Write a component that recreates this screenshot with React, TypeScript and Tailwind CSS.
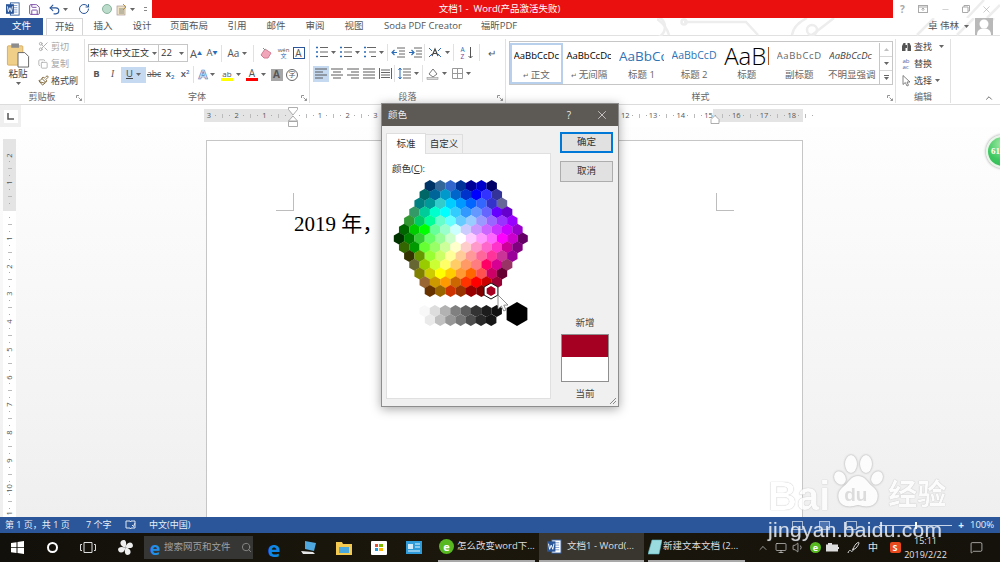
import { ReactNode } from "react";
import {
  Undo2,
  RotateCw,
  Scissors,
  Copy,
  Paintbrush,
  X,
  Minus,
  ChevronUp,
  Search,
  MessageSquare,
  Volume1,
  Monitor,
  Save,
} from "lucide-react";

const FONT = "[font-family:'Open_Sans','Noto_Sans_CJK_SC',sans-serif]";

// Office's standard honeycomb, row by row
const HEX_ROWS = [
  ["003366", "336699", "3366CC", "003399", "000099", "0000CC", "000066"],
  ["006666", "006699", "0099CC", "0066CC", "0033CC", "0000FF", "3333FF", "333399"],
  ["008080", "009999", "33CCCC", "00CCFF", "0099FF", "0066FF", "3366FF", "3333CC", "666699"],
  ["339966", "00CC99", "00FFCC", "00FFFF", "33CCFF", "3399FF", "6699FF", "6666FF", "6600FF", "6600CC"],
  ["339933", "00CC66", "00FF99", "66FFCC", "66FFFF", "66CCFF", "99CCFF", "9999FF", "9966FF", "9933FF", "9900FF"],
  ["006600", "00CC00", "00FF00", "66FF99", "99FFCC", "CCFFFF", "CCCCFF", "CC99FF", "CC66FF", "CC33FF", "CC00FF", "9900CC"],
  ["003300", "008000", "33CC33", "66FF66", "99FF99", "CCFFCC", "FFFFFF", "FFCCFF", "FF99FF", "FF66FF", "FF00FF", "CC00CC", "660066"],
  ["336600", "009900", "66FF33", "99FF66", "CCFF99", "FFFFCC", "FFCCCC", "FF99CC", "FF66CC", "FF33CC", "CC0099", "800080"],
  ["333300", "669900", "99FF33", "CCFF66", "FFFF99", "FFCC99", "FF9999", "FF6699", "FF3399", "CC3399", "990099"],
  ["666633", "99CC00", "CCFF33", "FFFF66", "FFCC66", "FF9966", "FF7C80", "FF0066", "D60093", "993366"],
  ["808000", "CCCC00", "FFFF00", "FFCC00", "FF9933", "FF6600", "FF5050", "CC0066", "660033"],
  ["996633", "CC9900", "FF9900", "CC6600", "FF3300", "FF0000", "CC0000", "990033"],
  ["663300", "996600", "CC3300", "993300", "990000", "800000", "A50021"],
];
const GRAYS_TOP = ["F8F8F8", "DDDDDD", "B2B2B2", "808080", "5F5F5F", "333333", "1C1C1C", "111111"];
const GRAYS_BOTTOM = ["EAEAEA", "C0C0C0", "969696", "777777", "4D4D4D", "292929", "161616"];

const hexPoints = (cx: number, cy: number, r: number) =>
  [0, 1, 2, 3, 4, 5]
    .map((i) => {
      const a = (Math.PI / 3) * i + Math.PI / 6;
      return `${(cx + r * Math.cos(a)).toFixed(2)},${(cy + r * Math.sin(a)).toFixed(2)}`;
    })
    .join(" ");

function ColorHoney() {
  const step = 10.3;
  const center = 460.8;
  return (
    <svg width={136} height={152} viewBox="395 178 136 152" className="block overflow-visible">
      {HEX_ROWS.map((row, r) =>
        row.map((c, i) => (
          <polygon
            key={`${r}-${i}`}
            points={hexPoints(center + (i - (row.length - 1) / 2) * step, 186 + r * 8.75, 6)}
            fill={`#${c}`}
          />
        ))
      )}
      {GRAYS_TOP.map((c, i) => (
        <polygon key={c} points={hexPoints(424.6 + i * 10.3, 311, 6)} fill={`#${c}`} />
      ))}
      {GRAYS_BOTTOM.map((c, i) => (
        <polygon key={c} points={hexPoints(430 + i * 10.2, 320, 6)} fill={`#${c}`} />
      ))}
      <polygon points={hexPoints(517, 314, 12)} fill="#000" />
      <polygon points={hexPoints(491, 291, 8)} fill="#fff" stroke="#111" strokeWidth="1" />
      <polygon points={hexPoints(491, 291, 5)} fill="#A50021" />
      <path d="M498 295 V309 L501.4 306 L503.8 311 L506 310 L503.8 305.2 L508 305 Z" fill="#fff" stroke="#777" strokeWidth=".8" />
    </svg>
  );
}

function Caret({ className = "" }: { className?: string }) {
  return (
    <svg width="5" height="3" viewBox="0 0 5 3" className={`shrink-0 ${className}`}>
      <path d="M0 0h5L2.5 3z" fill="#666" />
    </svg>
  );
}

function Launcher() {
  return (
    <svg width="7" height="7" viewBox="0 0 7 7" className="absolute right-[1px] bottom-[1px]">
      <path d="M.5 3V.5H3M2.5 2.5l3 3M5.5 3.5v2h-2" fill="none" stroke="#888" strokeWidth=".9" />
    </svg>
  );
}

function Tool({ children, className = "w-[16px]" }: { children: ReactNode; className?: string }) {
  return <div className={`flex h-[17px] shrink-0 items-center justify-center gap-[3px] text-[#555] ${className}`}>{children}</div>;
}

function Sep() {
  return <div className="mx-[1px] h-[17px] w-px shrink-0 bg-[#e1e1e1]" />;
}

function Group({ label, className, children, launcher = true }: { label: string; className: string; children: ReactNode; launcher?: boolean }) {
  return (
    <div className={`relative mt-[3px] mb-[1px] flex shrink-0 flex-col border-r border-[#e1e1e1] ${className}`}>
      <div className="flex-1">{children}</div>
      <div className="h-[12px] text-center text-[9px] leading-[12px] text-[#666]">{label}</div>
      {launcher && <Launcher />}
    </div>
  );
}

function Lines({ kind = "left" }: { kind?: "left" | "center" | "right" | "full" }) {
  const d = {
    left: "M1 2h12M1 5h8M1 8h12M1 11h8",
    center: "M1 2h12M3 5h8M1 8h12M3 11h8",
    right: "M1 2h12M5 5h8M1 8h12M5 11h8",
    full: "M1 2h12M1 5h12M1 8h12M1 11h12",
  }[kind];
  return (
    <svg width="14" height="13" viewBox="0 0 14 13">
      <path d={d} stroke="#5a5a5a" strokeWidth="1" fill="none" />
    </svg>
  );
}

function ListIcon({ color = "#2b6cb8", levels = false }: { color?: string; levels?: boolean }) {
  return (
    <svg width="13" height="13" viewBox="0 0 13 13">
      <path d="M1 1.5h2M1 6h2M1 10.5h2" stroke={color} strokeWidth="1.4" />
      <path d={levels ? "M4 1.5h9M6 6h7M8 10.5h5" : "M5 1.5h8M5 6h8M5 10.5h8"} stroke="#666" strokeWidth="1" />
    </svg>
  );
}

function WordIcon({ size = 14 }: { size?: number }) {
  return (
    <svg width={size} height={size} viewBox="0 0 16 16">
      <rect x="5" y="1" width="10" height="14" fill="#fff" stroke="#2b579a" />
      <path d="M8 4h5M8 6.5h5M8 9h5M8 11.5h5" stroke="#7f9ccb" />
      <rect x="0" y="2.5" width="9" height="11" fill="#2b579a" />
      <path d="M1.6 5l1.2 6 1.7-4.5L6.2 11l1.2-6" fill="none" stroke="#fff" strokeWidth="1" />
    </svg>
  );
}

function TabItem({ children, className }: { children: ReactNode; className: string }) {
  return <div className={`flex h-full shrink-0 items-center justify-center text-[9.5px] text-[#555] ${className}`}>{children}</div>;
}

function TitleBar() {
  return (
    <div className="flex h-[18px] shrink-0 items-center">
      <div className="flex w-[152px] shrink-0 items-center">
        <div className="flex w-[26px] justify-center">
          <WordIcon />
        </div>
        <div className="flex w-[16px] justify-center">
          <Save size={13} color="#7d4fa8" strokeWidth={1.8} />
        </div>
        <div className="ml-[5px] flex w-[14px] justify-center">
          <Undo2 size={13} color="#2b579a" strokeWidth={2} />
        </div>
        <Caret className="ml-[2px]" />
        <div className="ml-[8px] flex w-[16px] justify-center">
          <RotateCw size={12} color="#2b579a" strokeWidth={2} />
        </div>
        <div className="ml-[10px] h-[10px] w-[10px] rounded-full border border-[#88b39b] bg-[#bcdccb]" />
        <div className="ml-[4px] flex w-[12px] justify-center">
          <svg width="12" height="13" viewBox="0 0 12 13">
            <rect x="1" y="3" width="8" height="9" fill="#efe3c4" stroke="#a99" strokeWidth=".7" />
            <path d="M3 6h5M3 8h5M3 10h5" stroke="#666" strokeWidth=".7" />
            <path d="M7 1l3 3-3 3" fill="none" stroke="#b8923e" />
          </svg>
        </div>
        <Caret className="ml-[2px]" />
        <div className="ml-[9px] h-[4px] w-[3px] border-y border-[#888]" />
      </div>
      <div className="flex h-full w-[741px] shrink-0 items-center justify-center whitespace-pre bg-[#ea1010] pr-[46px] text-[9.5px] text-white">
        文档1 -  Word(产品激活失败)
      </div>
      <div className="relative flex h-full flex-1 items-center text-[#a8a8a8]">
        <svg width="107" height="18" viewBox="0 0 107 18" className="pointer-events-none absolute top-0 left-0">
          <path d="M74 18L91 0M94 18L107 5" fill="none" stroke="#ededed" strokeWidth="2.5" />
        </svg>
        <div className="relative flex w-[19px] justify-center">
          <span className="text-[10px] font-bold">?</span>
        </div>
        <div className="relative flex w-[22px] justify-center">
          <svg width="10" height="8" viewBox="0 0 10 8">
            <rect x=".5" y=".5" width="9" height="7" fill="none" stroke="#aaa" />
            <path d="M5 6V3M3.5 4.5L5 3l1.5 1.5M.5 2h9" fill="none" stroke="#aaa" />
          </svg>
        </div>
        <div className="relative flex w-[22px] justify-center">
          <Minus size={9} strokeWidth={1.4} />
        </div>
        <div className="relative flex w-[20px] justify-center">
          <svg width="8" height="8" viewBox="0 0 8 8">
            <path d="M2 2V.5h5.5V6H6M.5 2h5.5v5.5H.5z" fill="none" stroke="#aaa" />
          </svg>
        </div>
        <div className="relative flex w-[20px] justify-center">
          <X size={11} strokeWidth={1.3} />
        </div>
      </div>
    </div>
  );
}

function TabBar() {
  return (
    <div className="relative flex h-[18px] shrink-0 items-stretch border-b border-[#e1e1e1]">
      <svg width="343" height="18" viewBox="0 18 343 18" className="pointer-events-none absolute top-0 right-0">
        <g fill="none" stroke="#ededed" strokeWidth="2.5">
          <path d="M0 19c6 4 10 9 12 16M27 22h62l12 13M150 18c-10 5-14 10-15 17M155 35l22-17M260 35l17-17M300 35l17-17M320 35l17-17" />
          <circle cx="-3" cy="27" r="11" />
          <circle cx="27" cy="22" r="2.5" />
          <circle cx="155" cy="30" r="5" />
        </g>
      </svg>
      <TabItem className="w-[43px] bg-[#2b579a] text-white">文件</TabItem>
      <TabItem className="relative ml-[3px] -mb-px w-[37px] border-x border-t border-[#d5d5d5] bg-white text-[#2b579a]">开始</TabItem>
      <TabItem className="w-[40px]">插入</TabItem>
      <TabItem className="w-[38px]">设计</TabItem>
      <TabItem className="w-[56px]">页面布局</TabItem>
      <TabItem className="w-[40px]">引用</TabItem>
      <TabItem className="w-[38px]">邮件</TabItem>
      <TabItem className="w-[40px]">审阅</TabItem>
      <TabItem className="w-[38px]">视图</TabItem>
      <TabItem className="w-[100px]">Soda PDF Creator</TabItem>
      <TabItem className="w-[52px]">福昕PDF</TabItem>
      <div className="relative ml-auto flex items-center pr-[7px]">
        <span className="text-[9.5px] text-[#555]">卓 伟林</span>
        <Caret className="ml-[5px]" />
        <div className="ml-[6px] flex h-[17px] w-[18px] items-end justify-center overflow-hidden bg-[#b9b9b9]">
          <svg width="18" height="17" viewBox="0 0 18 17">
            <circle cx="9" cy="6" r="4.5" fill="#fff" />
            <path d="M2 17c0-5 3-6.500 7-6.500s7 1.500 7 6.500z" fill="#fff" />
          </svg>
        </div>
      </div>
    </div>
  );
}

function SmallCmd({ icon, label, disabled = false, caret = "" }: { icon: ReactNode; label: string; disabled?: boolean; caret?: string }) {
  return (
    <div className={`flex h-[17px] items-center gap-[1px] text-[9px] ${disabled ? "text-[#a6a6a6]" : "text-[#444]"}`}>
      <div className="flex w-[14px] justify-center">{icon}</div>
      <span>{label}</span>
      {caret && <Caret className={caret} />}
    </div>
  );
}

function ClipboardGroup() {
  return (
    <Group label="剪贴板" className="w-[85px]">
      <div className="flex">
        <div className="flex w-[36px] flex-col items-center pt-[3px]">
          <svg width="24" height="26" viewBox="0 0 24 27">
            <rect x="1" y="4" width="16" height="20" rx="1" fill="#f0cf88" stroke="#d6ae63" />
            <rect x="5" y="1.5" width="8" height="4.5" fill="#8d8d8d" />
            <path d="M12 11h7l4 4v11H12z" fill="#fff" stroke="#666" />
          </svg>
          <span className="text-[9.5px] leading-[11px] text-[#444]">粘贴</span>
          <Caret className="mt-[3px]" />
        </div>
        <div className="-mt-[1px] flex flex-col">
          <SmallCmd disabled label="剪切" icon={<Scissors size={11} color="#aaa" />} />
          <SmallCmd disabled label="复制" icon={<Copy size={10} color="#aaa" />} />
          <SmallCmd label="格式刷" icon={<Paintbrush size={11} color="#7a6030" />} />
        </div>
      </div>
    </Group>
  );
}

function FontGroup() {
  return (
    <Group label="字体" className="w-[225px]">
      <div className="flex items-center pt-[5px] pl-[3px]">
        <div className="flex h-[18px] w-[71px] shrink-0 items-center justify-between border border-[#c6c6c6] px-[1px] text-[9px] text-[#333]">
          <span className="whitespace-nowrap">宋体 (中文正文</span>
          <Caret />
        </div>
        <div className="-ml-px flex h-[18px] w-[30px] shrink-0 items-center justify-between border border-[#c6c6c6] px-[2px] text-[9.5px] text-[#333]">
          <span>22</span>
          <Caret className="mr-[1px]" />
        </div>
        <Tool className="w-[16px]">
          <span className="text-[11px] leading-none">
            A<sup className="text-[5px] text-[#2b6cb8]">▲</sup>
          </span>
        </Tool>
        <Tool className="w-[16px]">
          <span className="text-[9.5px] leading-none">
            A<sup className="text-[5px] text-[#2b6cb8]">▼</sup>
          </span>
        </Tool>
        <Sep />
        <Tool className="w-[29px]">
          <span className="text-[10px]">Aa</span>
          <Caret />
        </Tool>
        <Sep />
        <Tool className="ml-[1px] w-[20px]">
          <svg width="12" height="12" viewBox="0 0 12 12">
            <path d="M1 8l4-6 6 4-3 5H4z" fill="#f2a6ba" stroke="#d47c94" />
            <path d="M3 1l2 2" stroke="#888" />
          </svg>
        </Tool>
        <Tool className="w-[15px]">
          <div className="flex flex-col items-center text-[6px] leading-[6px]">
            <span>wén</span>
            <span className="text-[#2b6cb8]">文</span>
          </div>
        </Tool>
        <Tool className="w-[15px]">
          <div className="flex h-[12px] w-[12px] items-center justify-center border border-[#2b579a] text-[10px] leading-none">A</div>
        </Tool>
      </div>
      <div className="mt-[4px] flex items-center pl-[3px]">
        <Tool className="ml-[1px] w-[15px]">
          <b className="text-[9.5px]">B</b>
        </Tool>
        <Tool className="w-[17px]">
          <i className="text-[9.5px] [font-family:'Liberation_Serif',serif]">I</i>
        </Tool>
        <div className="flex h-[16px] w-[25px] shrink-0 items-center justify-center gap-[3px] bg-[#c5d9f1] text-[#444]">
          <u className="text-[9.5px]">U</u>
          <Caret />
        </div>
        <Tool className="w-[16px]">
          <s className="text-[8.5px]">abc</s>
        </Tool>
        <Tool className="w-[16px]">
          <span className="text-[9.5px] font-semibold">
            x<sub className="text-[6px] text-[#2b6cb8]">2</sub>
          </span>
        </Tool>
        <Tool className="w-[14px]">
          <span className="text-[9.5px] font-semibold">
            x<sup className="text-[6px] text-[#2b6cb8]">2</sup>
          </span>
        </Tool>
        <Sep />
        <Tool className="w-[24px]">
          <span className="text-[13px] font-bold text-[#dbe7f6] [-webkit-text-stroke:.7px_#4f81bd]">A</span>
          <Caret />
        </Tool>
        <Tool className="w-[24px]">
          <div className="flex flex-col items-center">
            <span className="text-[8px] leading-[9px]">ab</span>
            <div className="h-[3px] w-[12px] bg-[#ffff00]" />
          </div>
          <Caret />
        </Tool>
        <Tool className="w-[26px]">
          <div className="flex flex-col items-center">
            <span className="text-[10px] leading-[10px]">A</span>
            <div className="h-[3px] w-[12px] bg-[#ff0000]" />
          </div>
          <Caret />
        </Tool>
        <Tool className="w-[15px]">
          <div className="flex h-[12px] w-[12px] items-center justify-center bg-[#a6a6a6] text-[10px] font-bold">A</div>
        </Tool>
        <Tool className="w-[16px]">
          <div className="flex h-[12px] w-[12px] items-center justify-center rounded-full border border-[#666] text-[7px] leading-none">字</div>
        </Tool>
      </div>
    </Group>
  );
}

function ParagraphGroup() {
  return (
    <Group label="段落" className="w-[196px]">
      <div className="flex items-center pt-[5px] pl-[3px]">
        <Tool className="w-[24px]">
          <ListIcon />
          <Caret />
        </Tool>
        <Tool className="w-[24px]">
          <ListIcon />
          <Caret />
        </Tool>
        <Tool className="w-[25px]">
          <ListIcon levels />
          <Caret />
        </Tool>
        <Sep />
        <Tool className="w-[17px]">
          <svg width="14" height="11" viewBox="0 0 14 11">
            <path d="M6 1h8M8 4h6M8 7h6M6 10h8" stroke="#666" />
            <path d="M6 5.500H1M3.500 3L1 5.500 3.500 8" fill="none" stroke="#2b6cb8" strokeWidth="1.2" />
          </svg>
        </Tool>
        <Tool className="w-[17px]">
          <svg width="14" height="11" viewBox="0 0 14 11">
            <path d="M6 1h8M8 4h6M8 7h6M6 10h8" stroke="#666" />
            <path d="M1 5.500h5M3.500 3L6 5.500 3.500 8" fill="none" stroke="#2b6cb8" strokeWidth="1.2" />
          </svg>
        </Tool>
        <Sep />
        <Tool className="w-[26px]">
          <svg width="14" height="11" viewBox="0 0 14 11">
            <path d="M4 9l3-7 3 7M5.500 6.500h3" fill="none" stroke="#444" strokeWidth="1.2" />
            <path d="M1 1l3 3M13 1l-3 3M1 10l3-3M13 10l-3-3" stroke="#2b6cb8" />
          </svg>
          <Caret />
        </Tool>
        <Sep />
        <Tool className="w-[23px]">
          <div className="flex flex-col text-[6.5px] leading-[7px]">
            <span className="text-[#2b6cb8]">A</span>
            <span className="text-[#7a3fa0]">Z</span>
          </div>
          <svg width="5" height="12" viewBox="0 0 5 12">
            <path d="M2.500 0v11M.5 9l2 2 2-2" fill="none" stroke="#555" />
          </svg>
        </Tool>
        <Sep />
        <Tool className="w-[22px]">
          <span className="text-[10px] leading-none">↵</span>
        </Tool>
      </div>
      <div className="mt-[4px] flex items-center pl-[3px]">
        <div className="flex h-[16px] w-[16px] shrink-0 items-center justify-center bg-[#c5d9f1]">
          <Lines />
        </div>
        <Tool>
          <Lines kind="center" />
        </Tool>
        <Tool>
          <Lines kind="right" />
        </Tool>
        <Tool>
          <Lines kind="full" />
        </Tool>
        <Tool>
          <svg width="13" height="13" viewBox="0 0 13 13">
            <path d="M2 3h9M2 5.500h9M2 8h9M2 10.500h9" stroke="#666" />
            <path d="M.5 1v11M12.500 1v11" stroke="#2b6cb8" />
          </svg>
        </Tool>
        <Sep />
        <Tool className="w-[25px]">
          <svg width="13" height="13" viewBox="0 0 13 13">
            <path d="M5 2h8M5 5h8M5 8h8M5 11h8" stroke="#666" />
            <path d="M2 1v11M.5 3L2 1l1.500 2M.5 10L2 12l1.500-2" fill="none" stroke="#2b6cb8" />
          </svg>
          <Caret />
        </Tool>
        <Sep />
        <Tool className="w-[25px]">
          <svg width="13" height="13" viewBox="0 0 13 13">
            <path d="M3 7l4-5 4 5-4 3z" fill="#fff" stroke="#777" />
            <rect x="1" y="10.500" width="11" height="2" fill="#d8d8d8" stroke="#888" strokeWidth=".5" />
          </svg>
          <Caret />
        </Tool>
        <Tool className="w-[25px]">
          <svg width="11" height="11" viewBox="0 0 11 11">
            <path d="M.5.500h10v10H.500zM.5 5.500h10M5.500.5v10" fill="none" stroke="#999" />
          </svg>
          <Caret />
        </Tool>
      </div>
    </Group>
  );
}

function StyleItem({ label, sample, className = "", mark = false, selected = false }: { label: string; sample: string; className: string; mark?: boolean; selected?: boolean }) {
  return (
    <div className={`flex w-[52.6px] shrink-0 flex-col items-center overflow-hidden border-2 ${selected ? "border-[#b9d0ec]" : "border-transparent"}`}>
      <div className={`flex h-[22px] w-full items-center justify-center overflow-hidden whitespace-nowrap ${className}`}>
        <span className="w-[45px] overflow-hidden">{sample}</span>
      </div>
      <div className="mt-[1px] whitespace-nowrap text-[9.5px] leading-[13px] text-[#666]">
        {mark && <span className="mr-[2px] text-[7px]">↵</span>}
        {label}
      </div>
    </div>
  );
}

function StylesGroup() {
  return (
    <Group label="样式" className="w-[390px]">
      <div className="ml-[3px] mt-[2px] flex h-[44px] w-[384px] border border-[#c6c6c6] pt-[1px]">
        <StyleItem selected mark label="正文" sample="AaBbCcDc" className="text-[9.5px] text-black" />
        <StyleItem mark label="无间隔" sample="AaBbCcDc" className="text-[9.5px] text-black" />
        <StyleItem label="标题 1" sample="AaBbCc" className="text-[13.5px] text-[#2e74b5]" />
        <StyleItem label="标题 2" sample="AaBbCcD" className="text-[10.5px] text-[#2e74b5]" />
        <StyleItem label="标题" sample="AaBl" className="text-[24px] font-light text-black" />
        <StyleItem label="副标题" sample="AaBbCcD" className="text-[9.5px] tracking-[.6px] text-[#666]" />
        <StyleItem label="不明显强调" sample="AaBbCcDc" className="text-[9.5px] italic text-[#444]" />
        <div className="ml-[1px] flex flex-1 flex-col border-l border-[#c6c6c6]">
          <div className="flex flex-1 items-center justify-center border-b border-[#d6d6d6]">
            <Caret className="rotate-180 opacity-40" />
          </div>
          <div className="flex flex-1 items-center justify-center border-b border-[#d6d6d6]">
            <Caret />
          </div>
          <div className="flex flex-1 flex-col items-center justify-center gap-[1px]">
            <div className="h-px w-[5px] bg-[#666]" />
            <Caret />
          </div>
        </div>
      </div>
    </Group>
  );
}

function EditGroup() {
  return (
    <Group label="编辑" className="w-[55px]" launcher={false}>
      <div className="-mt-[1px] pl-[3px]">
        <SmallCmd
          label="查找"
          caret="ml-[6px]"
          icon={
            <svg width="11" height="10" viewBox="0 0 11 10">
              <path d="M1 9V4l1.500-3h2v8zM10 9V4L8.500 1h-2v8zM4 3h3v3H4z" fill="#555" />
            </svg>
          }
        />
        <SmallCmd
          label="替换"
          icon={
            <div className="flex flex-col text-[6px] leading-[6px] text-[#2b6cb8]">
              <span>ab</span>
              <span>ac</span>
            </div>
          }
        />
        <SmallCmd
          label="选择"
          caret="ml-[2px]"
          icon={
            <svg width="9" height="12" viewBox="0 0 9 12">
              <path d="M1 .5v9l2.300-2 1.700 3.500 1.500-.7L5 7h3z" fill="#fff" stroke="#666" strokeWidth=".8" />
            </svg>
          }
        />
      </div>
    </Group>
  );
}

function Ribbon() {
  return (
    <div className="relative flex h-[69px] shrink-0 border-b border-[#dcdcdc] bg-white">
      <ClipboardGroup />
      <FontGroup />
      <ParagraphGroup />
      <StylesGroup />
      <EditGroup />
      <ChevronUp size={10} color="#555" strokeWidth={2} className="absolute right-[6px] bottom-[1px]" />
    </div>
  );
}

function RulerCells({ labels, vertical = false }: { labels: number[]; vertical?: boolean }) {
  return (
    <>
      {labels.flatMap((n, i) => [
        <div key={`${i}n`} className={`flex shrink-0 items-center justify-center overflow-visible text-[7.5px] text-[#555] ${vertical ? "h-[6.95px] w-full -rotate-90" : "h-full w-[6.95px]"}`}>
          {n > 0 ? n : ""}
        </div>,
        <div key={`${i}a`} className={`flex shrink-0 items-center justify-center ${vertical ? "h-[6.95px] w-full" : "h-full w-[6.95px]"}`}>
          <div className="h-px w-px bg-[#aaa]" />
        </div>,
        <div key={`${i}b`} className={`flex shrink-0 items-center justify-center ${vertical ? "h-[6.95px] w-full" : "h-full w-[6.95px]"}`}>
          <div className={vertical ? "h-px w-[4px] bg-[#bbb]" : "h-[4px] w-px bg-[#bbb]"} />
        </div>,
        <div key={`${i}c`} className={`flex shrink-0 items-center justify-center ${vertical ? "h-[6.95px] w-full" : "h-full w-[6.95px]"}`}>
          <div className="h-px w-px bg-[#aaa]" />
        </div>,
      ])}
    </>
  );
}

function RulerRow() {
  return (
    <div className="flex h-[22px] shrink-0 items-start">
      <div className="flex h-[22px] w-[21px] shrink-0 items-center justify-center bg-[#efefef]">
        <div className="flex h-[13px] w-[14px] items-center justify-center bg-white">
          <svg width="7" height="7" viewBox="0 0 7 7">
            <path d="M1 0v6h6" fill="none" stroke="#555" strokeWidth="1.5" />
          </svg>
        </div>
      </div>
      <div className="relative ml-[183px] mt-[4px] flex h-[13px] w-[599px] bg-[linear-gradient(90deg,#e4e4e4_89px,#fff_89px,#fff_509px,#e4e4e4_509px)] pl-[1.5px]">
        <RulerCells labels={[3, 2, 1, 0, 1, 2, 3, 4, 5, 6, 7, 8, 9, 10, 11, 12, 13, 14, 15, 16, 17, 18]} />
        <svg width="12" height="22" viewBox="0 0 12 22" className="absolute -top-[2px] left-[83px]">
          <path d="M1.500.5h9v2L6 8 1.500 2.500zM6 9l4.500 5H1.500zM1.500 14.500h9v5h-9z" fill="#fff" stroke="#999" strokeWidth=".8" />
        </svg>
        <svg width="10" height="9" viewBox="0 0 10 9" className="absolute top-[6px] left-[506px]">
          <path d="M5 .5l4 4v4H1v-4z" fill="#fff" stroke="#999" strokeWidth=".8" />
        </svg>
      </div>
    </div>
  );
}

function Page() {
  return (
    <div className="relative h-[378px] w-[597px] shrink-0 border-x border-t border-[#c6c6c6] bg-white pt-[71px] pl-[87px]">
      <div className="absolute top-[52px] left-[69px] h-[18px] w-[18px] border-r border-b border-[#bdbdbd]" />
      <div className="absolute top-[52px] left-[509px] h-[18px] w-[18px] border-b border-l border-[#bdbdbd]" />
      <div className="text-[21px] leading-[24px] text-black [font-family:'Liberation_Serif','Noto_Sans_CJK_SC',serif]">2019 年，</div>
    </div>
  );
}

function DocArea() {
  return (
    <div className="flex min-h-0 flex-1 overflow-hidden bg-[linear-gradient(#fefefe,#efefef)]">
      <div className="w-[206px] shrink-0 pt-[12px]">
        <div className="ml-[3px] flex h-[378px] w-[13px] flex-col overflow-hidden bg-[linear-gradient(#e4e4e4_72px,#fff_72px)] pt-[12.5px]">
          <RulerCells vertical labels={[2, 1, 0, 1, 2, 3, 4, 5, 6, 7, 8, 9, 10, 11]} />
        </div>
      </div>
      <div className="pt-[13px]">
        <Page />
      </div>
    </div>
  );
}

function StatusBar() {
  return (
    <div className="flex h-[16px] shrink-0 items-center bg-[#2b579a] pl-[5px] text-[9px] text-[#e8eef7]">
      <span className="w-[81px]">第 1 页，共 1 页</span>
      <span className="w-[39px]">7 个字</span>
      <svg width="11" height="10" viewBox="0 0 11 10" className="mr-[13px]">
        <path d="M1 1h4l.500 1L6 1h4v7H6L5.500 9 5 8H1z" fill="none" stroke="#dfe7f3" />
        <path d="M7 5l1.500 1.500L10 3" fill="none" stroke="#dfe7f3" />
      </svg>
      <span>中文(中国)</span>
      <div className="ml-auto flex items-center">
        <div className="mr-[16px] flex items-center gap-[16px] opacity-70">
          <div className="h-[9px] w-[11px] border border-[#dfe7f3]" />
          <div className="h-[9px] w-[11px] border border-[#dfe7f3] bg-[#5d82b8]" />
          <div className="h-[9px] w-[11px] border border-[#dfe7f3]" />
        </div>
        <div className="relative mx-[6px] h-px w-[73px] bg-[#c9d6e9]">
          <div className="absolute -top-[3px] left-[36px] h-[7px] w-[2px] bg-white" />
        </div>
        <span className="mr-[6px] text-[10px] font-bold">+</span>
        <span className="w-[30px] text-[9.5px]">100%</span>
      </div>
    </div>
  );
}

function FanIcon() {
  const lobe = "M8 8C5.200 7.600 3.200 6 3.200 3.800 3.200 2 4.700 1 6.300 1 8.300 1 9.300 3.500 8 8z";
  return (
    <svg width="17" height="17" viewBox="0 0 16 16">
      {[0, 90, 180, 270].map((r) => (
        <path key={r} d={lobe} transform={`rotate(${r} 8 8)`} fill="#eeeeee" />
      ))}
    </svg>
  );
}

function Taskbar() {
  return (
    <div className="flex h-[29px] shrink-0 items-stretch bg-[linear-gradient(90deg,#12100a,#1b170c_45%,#15120b)] text-[9.5px] text-[#dedede]">
      <div className="flex w-[35px] items-center justify-center">
        <svg width="13" height="13" viewBox="0 0 13 13">
          <path d="M0 2l5.500-.8v5H0zM6.500 1L13 0v6.200H6.500zM0 7h5.500v5L0 11.200zM6.500 7H13v6l-6.500-1z" fill="#fff" />
        </svg>
      </div>
      <div className="flex w-[35px] items-center justify-center">
        <div className="h-[11px] w-[11px] rounded-full border-2 border-white" />
      </div>
      <div className="flex w-[36px] items-center justify-center">
        <svg width="16" height="11" viewBox="0 0 16 11">
          <path d="M4 .5h8v10H4zM2 2.500H.5v6H2M14 2.500h1.500v6H14" fill="none" stroke="#ddd" />
        </svg>
      </div>
      <div className="flex w-[38px] items-center justify-center">
        <FanIcon />
      </div>
      <div className="my-[3px] flex w-[109px] items-center bg-[#363634] pl-[3px]">
        <span className="w-[16px] text-center text-[18px] font-bold leading-none text-[#1f8fe8]">e</span>
        <span className="ml-[1px] text-[9.5px] text-[#a0a0a0]">搜索网页和文件</span>
        <Search size={11} color="#8a8a8a" className="ml-[10px]" />
      </div>
      <div className="ml-[4px] flex w-[34px] items-center justify-center">
        <span className="text-[22px] font-bold leading-none text-[#0f86e2]">e</span>
      </div>
      <div className="flex w-[35px] items-center justify-center">
        <svg width="18" height="16" viewBox="0 0 18 16">
          <path d="M5 1l11 2-2 8-9-2z" fill="#4fa8e0" />
          <path d="M1 11l12 1 2 2H3z" fill="#e6e6e6" />
        </svg>
      </div>
      <div className="flex w-[35px] items-center justify-center">
        <svg width="16" height="14" viewBox="0 0 16 14">
          <path d="M0 1h6l1 2h9v11H0z" fill="#f3c94f" />
          <rect x="3" y="6" width="10" height="6" fill="#49a8e0" />
        </svg>
      </div>
      <div className="flex w-[35px] items-center justify-center">
        <div className="grid h-[14px] w-[16px] grid-cols-2 content-center justify-center gap-[1px] rounded-[1px] bg-white px-[4px]">
          <div className="h-[3px] bg-[#e8502f]" />
          <div className="h-[3px] bg-[#7fba00]" />
          <div className="h-[3px] bg-[#1ea0e0]" />
          <div className="h-[3px] bg-[#ffb900]" />
        </div>
      </div>
      <div className="flex w-[36px] items-center justify-center">
        <svg width="16" height="13" viewBox="0 0 16 13">
          <rect width="16" height="13" fill="#2f9bd8" />
          <rect x="2" y="3" width="5" height="5" fill="#cfeafa" />
          <path d="M9 3h5M9 6h5M2 10h12" stroke="#e8f6fe" />
        </svg>
      </div>
      <div className="ml-[6px] flex w-[97px] items-center border-b-2 border-[#a9a9a9] pl-[1px]">
        <div className="mr-[3px] flex h-[15px] w-[15px] items-center justify-center rounded-full bg-[#58b81f] text-[11px] font-bold leading-none text-white">e</div>
        <span className="whitespace-nowrap">怎么改变word下...</span>
      </div>
      <div className="ml-[4px] flex w-[105px] items-center border-b-2 border-[#a9a9a9] bg-[#38362f] pl-[8px]">
        <WordIcon size={15} />
        <span className="ml-[5px] whitespace-nowrap">文档1 - Word(...</span>
      </div>
      <div className="ml-[4px] flex w-[97px] items-center border-b-2 border-[#a9a9a9]">
        <svg width="14" height="16" viewBox="0 0 14 16">
          <path d="M4 1h10l-3 14H0z" fill="#9adbe0" stroke="#5fb3bd" strokeWidth=".6" />
        </svg>
        <span className="ml-[1px] whitespace-nowrap">新建文本文档 (2...</span>
      </div>
      <div className="ml-[9px] flex w-[18px] items-center justify-center">
        <ChevronUp size={12} color="#ddd" strokeWidth={1.3} />
      </div>
      <div className="flex w-[18px] items-center justify-center">
        <Monitor size={12} color="#ddd" strokeWidth={1.3} />
      </div>
      <div className="flex w-[17px] items-center justify-center">
        <Volume1 size={13} color="#ddd" strokeWidth={1.3} />
      </div>
      <div className="flex w-[17px] items-center justify-center">
        <div className="flex h-[11px] w-[11px] items-center justify-center rounded-full bg-[#58b81f] text-[9px] font-bold leading-none text-white">e</div>
      </div>
      <div className="flex w-[17px] items-center justify-center">
        <svg width="13" height="9" viewBox="0 0 13 9">
          <rect x=".5" y="2" width="11" height="6" fill="#ddd" stroke="#ddd" />
          <rect x="2" y="0" width="4" height="2" fill="#ddd" />
          <rect x="12" y="4" width="1" height="2" fill="#ddd" />
        </svg>
      </div>
      <div className="flex w-[24px] items-center justify-center">
        <svg width="13" height="13" viewBox="0 0 13 13">
          <path d="M1 12c1-3 2-3 3-2s2 0 2-1 1-4 3-6 3-2 3-1-2 4-3 5-3 2-4 1" fill="none" stroke="#ddd" />
        </svg>
      </div>
      <div className="flex w-[16px] items-center justify-center text-[10px] text-[#e4e4e4]">中</div>
      <div className="ml-[3px] flex w-[22px] items-center justify-center">
        <div className="flex h-[11px] w-[11px] items-center justify-center rounded-[2px] bg-[#e8491d] text-[9px] font-bold leading-none text-white">S</div>
      </div>
      <div className="flex w-[39px] flex-col items-center justify-center whitespace-nowrap text-[9px] leading-[14px] text-[#e4e4e4]">
        <span>15:11</span>
        <span>2019/2/22</span>
      </div>
      <div className="ml-[15px] flex w-[32px] items-center justify-center">
        <MessageSquare size={13} color="#eee" strokeWidth={1.2} />
      </div>
    </div>
  );
}

function ColorDialog() {
  return (
    <div className="absolute top-[103px] left-[381px] flex h-[304px] w-[238px] flex-col border border-[#8d8d8d] bg-[#f0f0f0] shadow-[0_2px_10px_rgba(0,0,0,.35)]">
      <div className="flex h-[22px] shrink-0 items-center bg-[#5d5955] pl-[6px] text-[9.5px] text-[#ececec]">
        <span>颜色</span>
        <span className="ml-auto mr-[24px] text-[10px]">?</span>
        <X size={14} strokeWidth={1.2} color="#eee" className="mr-[9px]" />
      </div>
      <div className="relative flex flex-1 pl-[4px]">
        <div className="flex flex-col pt-[6px]">
          <div className="flex h-[21px] items-end text-[9.5px] text-[#333]">
            <div className="relative z-10 -mb-px flex h-[21px] w-[40px] items-center justify-center border-x border-t border-[#dedede] bg-white">标准</div>
            <div className="flex h-[19px] w-[37px] items-center justify-center border-t border-r border-[#dedede] bg-[#f0f0f0]">自定义</div>
          </div>
          <div className="h-[246px] w-[165px] border border-[#e0e0e0] bg-white pt-[8px] pl-[5px]">
            <div className="text-[9.5px] leading-[13px] text-[#333]">
              颜色(<u>C</u>):
            </div>
            <div className="ml-[3px] mt-[3px]">
              <ColorHoney />
            </div>
          </div>
        </div>
        <div className="ml-[9px] flex w-[53px] flex-col pt-[6px]">
          <div className="flex h-[21px] items-center justify-center border-2 border-[#0078d7] bg-[#e1e1e1] text-[9.5px] text-[#333]">确定</div>
          <div className="mt-[8px] flex h-[21px] items-center justify-center border border-[#adadad] bg-[#e1e1e1] text-[9.5px] text-[#333]">取消</div>
          <div className="mt-[134px] flex flex-col items-center pr-[3px] text-[9.5px] text-[#444]">
            <span className="leading-[13px]">新增</span>
            <div className="mt-[5px] flex h-[48px] w-[48px] flex-col border border-[#8f8f8f] bg-white">
              <div className="h-[22px] bg-[#a50021]" />
            </div>
            <span className="mt-[5px] leading-[13px]">当前</span>
          </div>
        </div>
        <svg width="8" height="8" viewBox="0 0 8 8" className="absolute right-[1px] bottom-[1px]">
          <path d="M7 1L1 7M7 4L4 7" stroke="#8a8a8a" />
        </svg>
      </div>
    </div>
  );
}

function Watermark() {
  return (
    <div className="pointer-events-none absolute top-[454px] left-[768px] text-white opacity-80 [font-family:'Liberation_Sans','Noto_Sans_CJK_SC',sans-serif]">
      <div className="flex h-[56px] items-end [text-shadow:0_0_1px_#8f8f8f]">
        <span className="-mb-[9px] text-[40px] font-bold leading-[46px]">Bai</span>
        <div className="relative ml-[2px] h-[56px] w-[52px]">
          <svg width="52" height="56" viewBox="0 0 52 56" className="drop-shadow-[0_0_1px_#8f8f8f]">
            <ellipse cx="8" cy="24" rx="5.5" ry="7" transform="rotate(-30 8 24)" fill="#fff" />
            <ellipse cx="19" cy="10" rx="6" ry="9" fill="#fff" />
            <ellipse cx="34" cy="10" rx="6" ry="9" fill="#fff" />
            <ellipse cx="45" cy="24" rx="5.5" ry="7" transform="rotate(30 45 24)" fill="#fff" />
            <path d="M26 22c7 0 9 6 14 10s7 8 5 14-9 8-19 5c-10 3-17 1-19-5s0-10 5-14 7-10 14-10z" fill="#fff" />
          </svg>
          <span className="absolute top-[31px] left-[12px] text-[19px] font-bold leading-none text-[#d8d8d8] [text-shadow:none]">du</span>
        </div>
        <span className="-mb-[5px] ml-[4px] text-[29px] font-bold leading-[40px]">经验</span>
      </div>
      <div className="mt-[8px] text-[21px] leading-[24px] tracking-[.3px] [text-shadow:0_0_1px_#6d87b0]">jingyan.baidu.com</div>
    </div>
  );
}

export default function App() {
  return (
    <div className={`relative flex h-[562px] w-[1000px] flex-col overflow-hidden bg-white ${FONT}`}>
      <TitleBar />
      <TabBar />
      <Ribbon />
      <RulerRow />
      <DocArea />
      <StatusBar />
      <Taskbar />
      <ColorDialog />
      {/* floating green speed ball, cut by the screen edge */}
      <div className="absolute top-[135px] left-[986px] flex h-[33px] w-[33px] items-center rounded-full border-2 border-[#e8f5e8] bg-[radial-gradient(circle_at_50%_25%,#a6eba6,#3fc862_60%,#2fb552)] pl-[3px] text-[9px] font-bold text-white shadow-[0_0_3px_rgba(0,0,0,.45)] [font-family:'Liberation_Serif',serif]">61</div>
      <Watermark />
    </div>
  );
}
